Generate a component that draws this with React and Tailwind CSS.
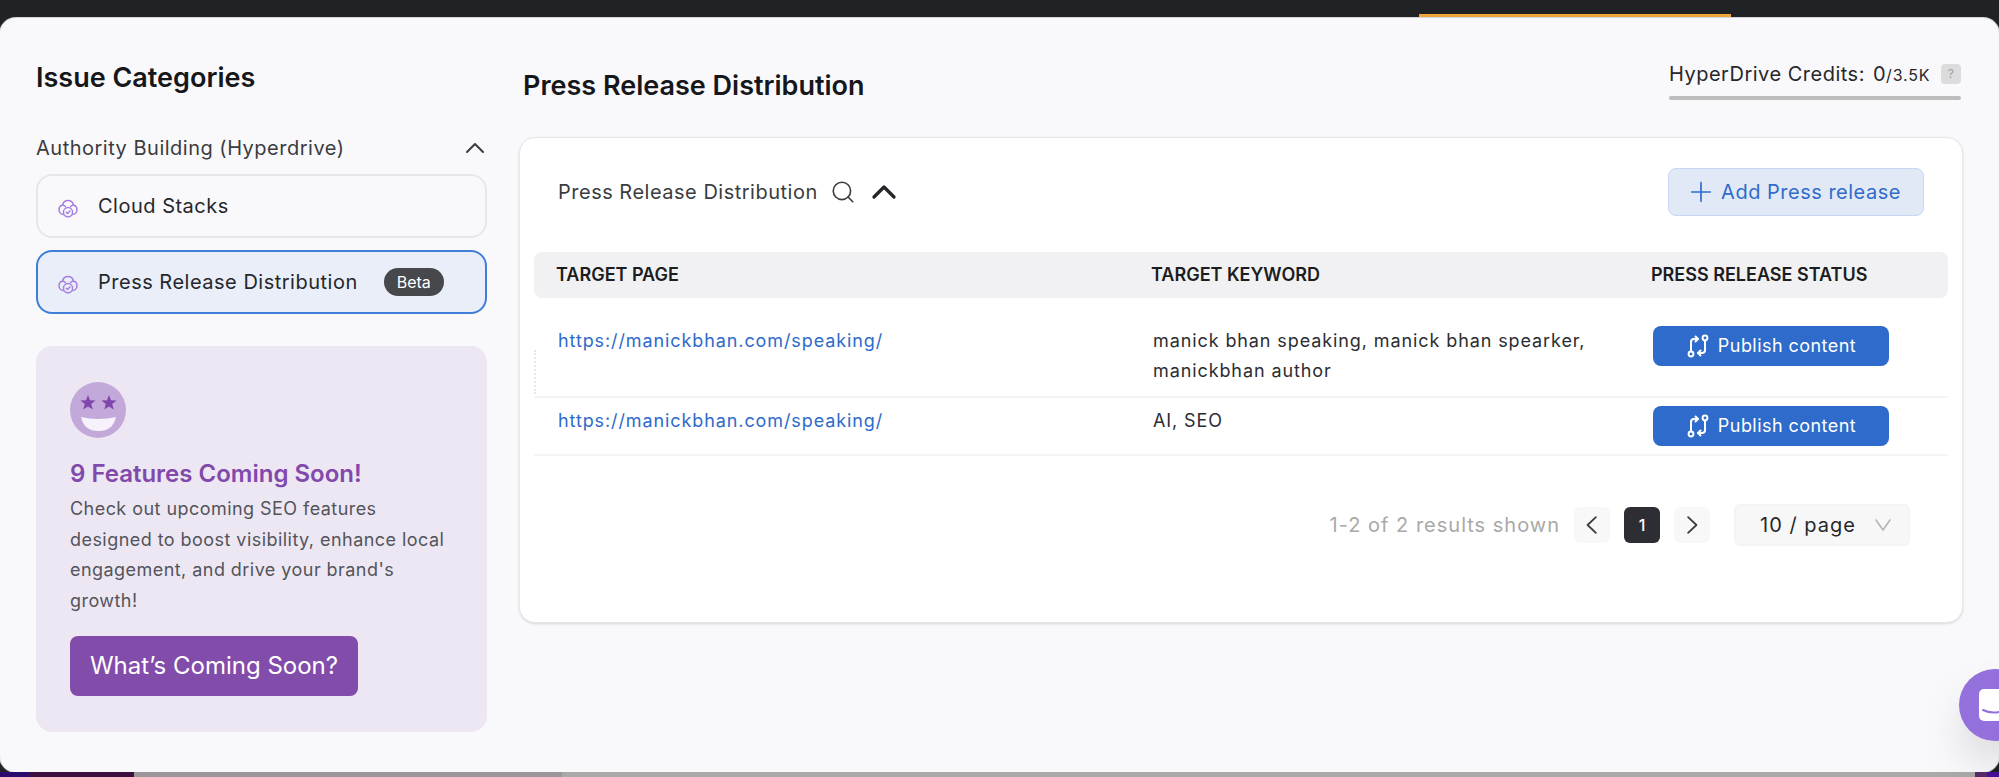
import React from "react";
import { ChevronUp, Search, Plus } from "lucide-react";

function CloudIcon() {
  return (
    <svg viewBox="0 0 24 24" fill="none" stroke="#a67fe0" strokeWidth="1.5" strokeLinecap="round" strokeLinejoin="round" className="size-6 shrink-0">
      <path d="M7.6 20.6A4.9 4.9 0 0 1 6.6 11A5.5 5.5 0 0 1 17.4 11A4.9 4.9 0 0 1 16.4 20.6" />
      <path d="M6.6 11A4.6 4.6 0 0 1 9.4 12.6M17.4 11A4.6 4.6 0 0 0 14.6 12.6" />
      <circle cx="12" cy="18.2" r="4.6" />
      <path d="M10.2 18.3l1.3 1.2 2.4-2.5" />
    </svg>
  );
}

function PublishIcon() {
  return (
    <svg viewBox="0 0 24 24" fill="none" stroke="currentColor" strokeWidth="2" strokeLinecap="round" strokeLinejoin="round" className="size-6 shrink-0">
      <circle cx="19" cy="4" r="2.4" />
      <circle cx="5" cy="20" r="2.4" />
      <path d="M5 17.5V8a3 3 0 0 1 3-3h4" />
      <path d="M9.5 2.5L12 5l-2.5 2.5" />
      <path d="M19 6.5V16a3 3 0 0 1-3 3h-4" />
      <path d="M14.5 16.5L12 19l2.5 2.5" />
    </svg>
  );
}

const starPoints = "18,13 20,18.25 25.6,18.5 21.2,22.05 22.7,27.5 18,24.4 13.3,27.5 14.8,22.05 10.4,18.5 16,18.25";

function StarFace() {
  return (
    <svg viewBox="0 0 56 56" className="size-14">
      <circle cx="28" cy="28" r="28" fill="#c3a9da" />
      <polygon fill="#7f47ab" points={starPoints} />
      <polygon fill="#7f47ab" points={starPoints} transform="translate(21 0)" />
      <path d="M11 35Q28 39 46 35Q43 49 28.5 49Q14 49 11 35Z" fill="#f6f1fa" />
    </svg>
  );
}

function Chevron({ d, className }) {
  return (
    <svg viewBox="0 0 16 18" fill="none" stroke="currentColor" strokeWidth="1.6" strokeLinecap="round" strokeLinejoin="round" className={className}>
      <path d={d} />
    </svg>
  );
}

function PublishButton() {
  return (
    <button className="flex h-10 w-59 items-center justify-center gap-2 rounded-lg bg-[#2e6bca] text-lg tracking-wide text-white">
      <PublishIcon />
      Publish content
    </button>
  );
}

const gridCols = "grid grid-cols-[595px_500px_1fr]";

export default function App() {
  return (
    <div className="relative flex h-screen w-full flex-col overflow-hidden bg-[#212226] font-[Inter,sans-serif]">
      <div className="flex h-4.5 shrink-0 items-end justify-end">
        <div className="mr-67 h-1 w-78 bg-[#eea63c]" />
      </div>

      <div className="flex min-h-0 flex-1 gap-8 rounded-2xl bg-[#f9f9fb] px-9 ring-1 ring-gray-300">
        <aside className="w-[451px] shrink-0 pt-11">
          <h2 className="text-[27px]/8 font-semibold text-[#16171a]">Issue Categories</h2>
          <div className="mt-10 flex h-7 items-center justify-between text-xl tracking-wide text-[#3b3c40]">
            <span>Authority Building (Hyperdrive)</span>
            <ChevronUp className="-mr-1 size-8" strokeWidth={1.5} />
          </div>
          <div className="mt-3 flex flex-col gap-3">
            <div className="flex h-16 items-center gap-4.5 rounded-2xl border-2 border-gray-200 px-4.5 text-xl tracking-wide text-[#26272b]">
              <CloudIcon />
              <span>Cloud Stacks</span>
            </div>
            <div className="flex h-16 items-center gap-4.5 rounded-2xl border-2 border-[#3f7dd6] bg-[#e9eef8] px-4.5 text-xl tracking-wide text-[#26272b]">
              <CloudIcon />
              <span>Press Release Distribution</span>
              <span className="ml-2 flex h-7 w-15 items-center justify-center rounded-full bg-[#47484c] text-base tracking-normal text-white">Beta</span>
            </div>
          </div>
          <div className="mt-8 rounded-2xl bg-[#ede7f3] pt-9 pr-8 pb-9 pl-8.5">
            <StarFace />
            <h3 className="mt-5 text-2xl font-semibold text-[#8149ab]">9 Features Coming Soon!</h3>
            <p className="mt-1 text-lg/[30.6px] tracking-wide text-[#53545b]">
              Check out upcoming SEO features designed to boost visibility, enhance local engagement, and drive your brand's growth!
            </p>
            <button className="mt-5 h-15 w-72 rounded-lg bg-[#824cab] text-2xl text-white">What’s Coming Soon?</button>
          </div>
        </aside>

        <main className="min-w-0 flex-1 pt-10.5">
          <div className="flex items-start justify-between pr-0.5 pl-1">
            <h1 className="mt-2.5 text-[27px]/8 font-semibold text-[#16171a]">Press Release Distribution</h1>
            <div className="w-73">
              <div className="flex h-7 items-center gap-2 text-xl tracking-wide text-[#26272b]">
                <span>HyperDrive Credits:</span>
                <span>0<span className="text-base tracking-wider">/3.5K</span></span>
                <span className="ml-auto flex size-5 items-center justify-center rounded-sm bg-[#dcdcdc] text-xs text-gray-400">?</span>
              </div>
              <div className="mt-2 h-1 rounded-full bg-[#bdbdbd]" />
            </div>
          </div>

          <section className="mt-8.75 rounded-2xl border border-gray-200 bg-white px-3.5 pt-7.5 pb-19 shadow-sm">
            <div className="flex h-12 items-center justify-between px-6">
              <div className="flex items-center gap-3 text-xl tracking-wide text-[#3b3c40]">
                <span>Press Release Distribution</span>
                <Search className="size-6.5" strokeWidth={1.5} />
                <ChevronUp className="-ml-1 size-10 text-[#26272b]" strokeWidth={2} />
              </div>
              <button className="flex h-12 w-64 items-center justify-center gap-1 rounded-lg border border-[#c8d8f2] bg-[#e1e8f6] pr-1.5 text-xl tracking-wide text-[#2f6ccb]">
                <Plus className="size-8" strokeWidth={1.25} />
                Add Press release
              </button>
            </div>

            <div className={`${gridCols} mt-9 h-11.5 items-center rounded-lg bg-[#f1f1f3] pl-5.5 text-lg font-semibold text-[#1c1d20]`}>
              <div>TARGET PAGE</div>
              <div>TARGET KEYWORD</div>
              <div>PRESS RELEASE STATUS</div>
            </div>

            <div className={`${gridCols} relative border-b-2 border-gray-100 pt-7 pb-2.5 pl-6 text-lg/[30px] tracking-wider text-[#2c2d31]`}>
              <div className="absolute top-13 left-0 h-11 border-l-2 border-dotted border-gray-200" />
              <a className="text-[#2e6bca]">https://manickbhan.com/speaking/</a>
              <div className="pr-8">manick bhan speaking, manick bhan spearker, manickbhan author</div>
              <div className="tracking-normal"><PublishButton /></div>
            </div>
            <div className={`${gridCols} border-b-2 border-gray-100 py-2 pl-6 text-lg/[30px] tracking-wider text-[#2c2d31]`}>
              <a className="text-[#2e6bca]">https://manickbhan.com/speaking/</a>
              <div>AI, SEO</div>
              <div className="tracking-normal"><PublishButton /></div>
            </div>

            <div className="mt-12 flex items-center justify-end gap-3.5 pr-9.5">
              <span className="text-xl tracking-wider text-[#a9a9a9]">1-2 of 2 results shown</span>
              <span className="flex size-9 items-center justify-center rounded-md bg-[#f8f8f8] text-[#3b3c40]"><Chevron d="M11.5 2L4 9l7.5 7" className="size-5" /></span>
              <span className="flex size-9 items-center justify-center rounded-md bg-[#2d2e33] text-base font-medium text-white">1</span>
              <span className="flex size-9 items-center justify-center rounded-md bg-[#f8f8f8] text-[#3b3c40]"><Chevron d="M4.5 2L12 9l-7.5 7" className="size-5" /></span>
              <span className="ml-2.5 flex h-10.5 w-44 items-center justify-between rounded-md border-2 border-gray-100 bg-[#f7f7f7] pr-4 pl-6 text-xl tracking-wider text-[#26272b]">
                10 / page
                <Chevron d="M1 4l7 10 7-10" className="size-4.5 text-[#b5b5b5]" />
              </span>
            </div>
          </section>
        </main>
      </div>

      <div className="flex h-1.25 shrink-0">
        <div className="w-7.5 bg-[#2a0a6e]" />
        <div className="w-26 bg-[#3d0f3d]" />
        <div className="w-107 bg-[#9d969a]" />
        <div className="flex-1 bg-[#a9a9a9]" />
        <div className="w-3 bg-[#5a2a6a]" />
        <div className="w-3 bg-[#4a0f9a]" />
      </div>

      <div className="absolute -right-8 bottom-9 flex size-18 items-center rounded-full bg-[#9370db] pl-5 shadow-2xl">
        <svg viewBox="0 0 32 32" className="size-8 shrink-0">
          <rect width="32" height="32" rx="5" fill="#fff" />
          <path d="M4 21Q14 26 26 21" fill="none" stroke="#9370db" strokeWidth="2" strokeLinecap="round" />
        </svg>
      </div>
    </div>
  );
}
